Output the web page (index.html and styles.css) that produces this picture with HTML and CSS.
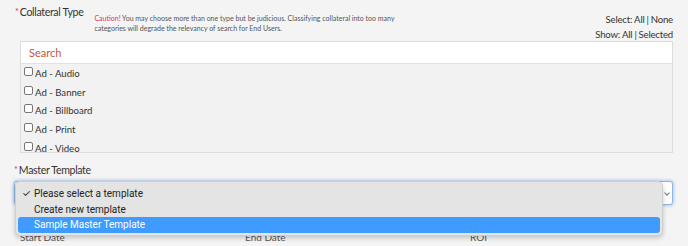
FILE: index.html
```html
<!DOCTYPE html>
<html>
<head>
<meta charset="utf-8">
<link rel="stylesheet" href="styles.css">
</head>
<body>
<div class="page">
  <section class="field collateral">
    <div class="head">
      <div class="label"><span class="req">*</span> Collateral Type</div>
      <div class="caution"><span class="warn">Caution!</span> You may choose more than one type but be judicious. Classifying collateral into too many categories will degrade the relevancy of search for End Users.</div>
      <div class="links">
        <div>Select: All<span class="sep">|</span>None</div>
        <div>Show: All<span class="sep">|</span>Selected</div>
      </div>
    </div>
    <div class="picker">
      <div class="search">Search</div>
      <ul class="list">
        <li><span class="cb"></span>Ad - Audio</li>
        <li><span class="cb"></span>Ad - Banner</li>
        <li><span class="cb"></span>Ad - Billboard</li>
        <li><span class="cb"></span>Ad - Print</li>
        <li><span class="cb"></span>Ad - Video</li>
      </ul>
    </div>
  </section>
  <section class="field master">
    <div class="label"><span class="req">*</span> Master Template</div>
    <div class="selectwrap">
      <div class="select"><span class="arrow"></span></div>
      <div class="menu">
        <div class="opt checked"><span class="check">✓</span>Please select a template</div>
        <div class="opt">Create new template</div>
        <div class="opt hl">Sample Master Template</div>
      </div>
    </div>
    <div class="dates">
      <div>Start Date</div>
      <div>End Date</div>
      <div>ROI</div>
    </div>
  </section>
</div>
</body>
</html>
```

FILE: styles.css
```css
html, body {
  margin: 0;
  padding: 0;
  background: #f4f4f4;
  font-family: "Lato", "Open Sans", sans-serif;
  color: #333;
  overflow: hidden;
}
.page {
  padding: 5px 15px 0 14px;
}
.head {
  display: flex;
  align-items: flex-start;
  padding-left: 1px;
  height: 36px;
}
.label {
  font-size: 10.6px;
  letter-spacing: -0.35px;
  color: #333;
  line-height: 14px;
  white-space: nowrap;
}
.req {
  color: #e0314b;
  font-size: 9px;
  vertical-align: top;
  margin-right: -1px;
}
.caution {
  font-size: 7px;
  line-height: 10px;
  color: #555;
  margin: 8px 0 0 11px;
  width: 320px;
}
.warn { color: #e8304e; }
.links {
  margin-left: auto;
  margin-top: 8px;
  text-align: right;
  font-size: 9.6px;
  line-height: 14.5px;
  letter-spacing: -0.2px;
  color: #333;
}
.sep {
  margin: 0 2px;
}
.picker {
  margin: 0 0 0 6px;
  border: 1px solid #ddd;
  height: 110px;
  overflow: hidden;
  background: #f2f2f2;
}
.search {
  background: #fff;
  height: 21px;
  line-height: 21px;
  border-bottom: 1px solid #e2e2e2;
  padding-left: 8px;
  font-size: 11px;
  color: #c4573a;
}
.list {
  list-style: none;
  margin: 0;
  padding: 0 0 0 3px;
}
.list li {
  height: 18.7px;
  display: flex;
  align-items: center;
  font-size: 9.6px;
  color: #333;
}
.cb {
  width: 7px;
  height: 7px;
  border: 1px solid #777;
  border-radius: 2px;
  background: #fff;
  margin-right: 2px;
  position: relative;
  top: -2px;
}
.master {
  margin-top: 10px;
}
.selectwrap {
  position: relative;
  margin-top: 4px;
}
.select {
  height: 22px;
  border: 1px solid #8fb6e0;
  border-radius: 3px;
  background: #fff;
  box-shadow: 0 0 3px 1px rgba(100, 160, 230, 0.45);
  position: relative;
}
.arrow {
  position: absolute;
  right: 3px;
  top: 9px;
  width: 3px;
  height: 3px;
  border-right: 1px solid #777;
  border-bottom: 1px solid #777;
  transform: rotate(45deg);
}
.menu {
  position: absolute;
  left: 1px;
  top: 0;
  width: 642px;
  background: #e4e4e4;
  border: 1px solid #cfcfcf;
  border-radius: 5px;
  box-shadow: 0 2px 5px rgba(0, 0, 0, 0.2);
  padding: 4px 2px 2px 2px;
  font-family: "Roboto", "Inter", sans-serif;
  font-size: 10px;
  color: #222;
  z-index: 2;
}
.opt {
  height: 15.7px;
  line-height: 15.7px;
  padding-left: 16px;
  position: relative;
  border-radius: 3px;
}
.check {
  position: absolute;
  left: 4px;
  font-size: 10px;
}
.opt.hl {
  background: #3f9bfd;
  color: #fff;
}
.dates {
  display: grid;
  grid-template-columns: 225px 225px 1fr;
  padding-left: 6px;
  margin-top: 26px;
  font-size: 10px;
  line-height: 13px;
  color: #555;
}
```
